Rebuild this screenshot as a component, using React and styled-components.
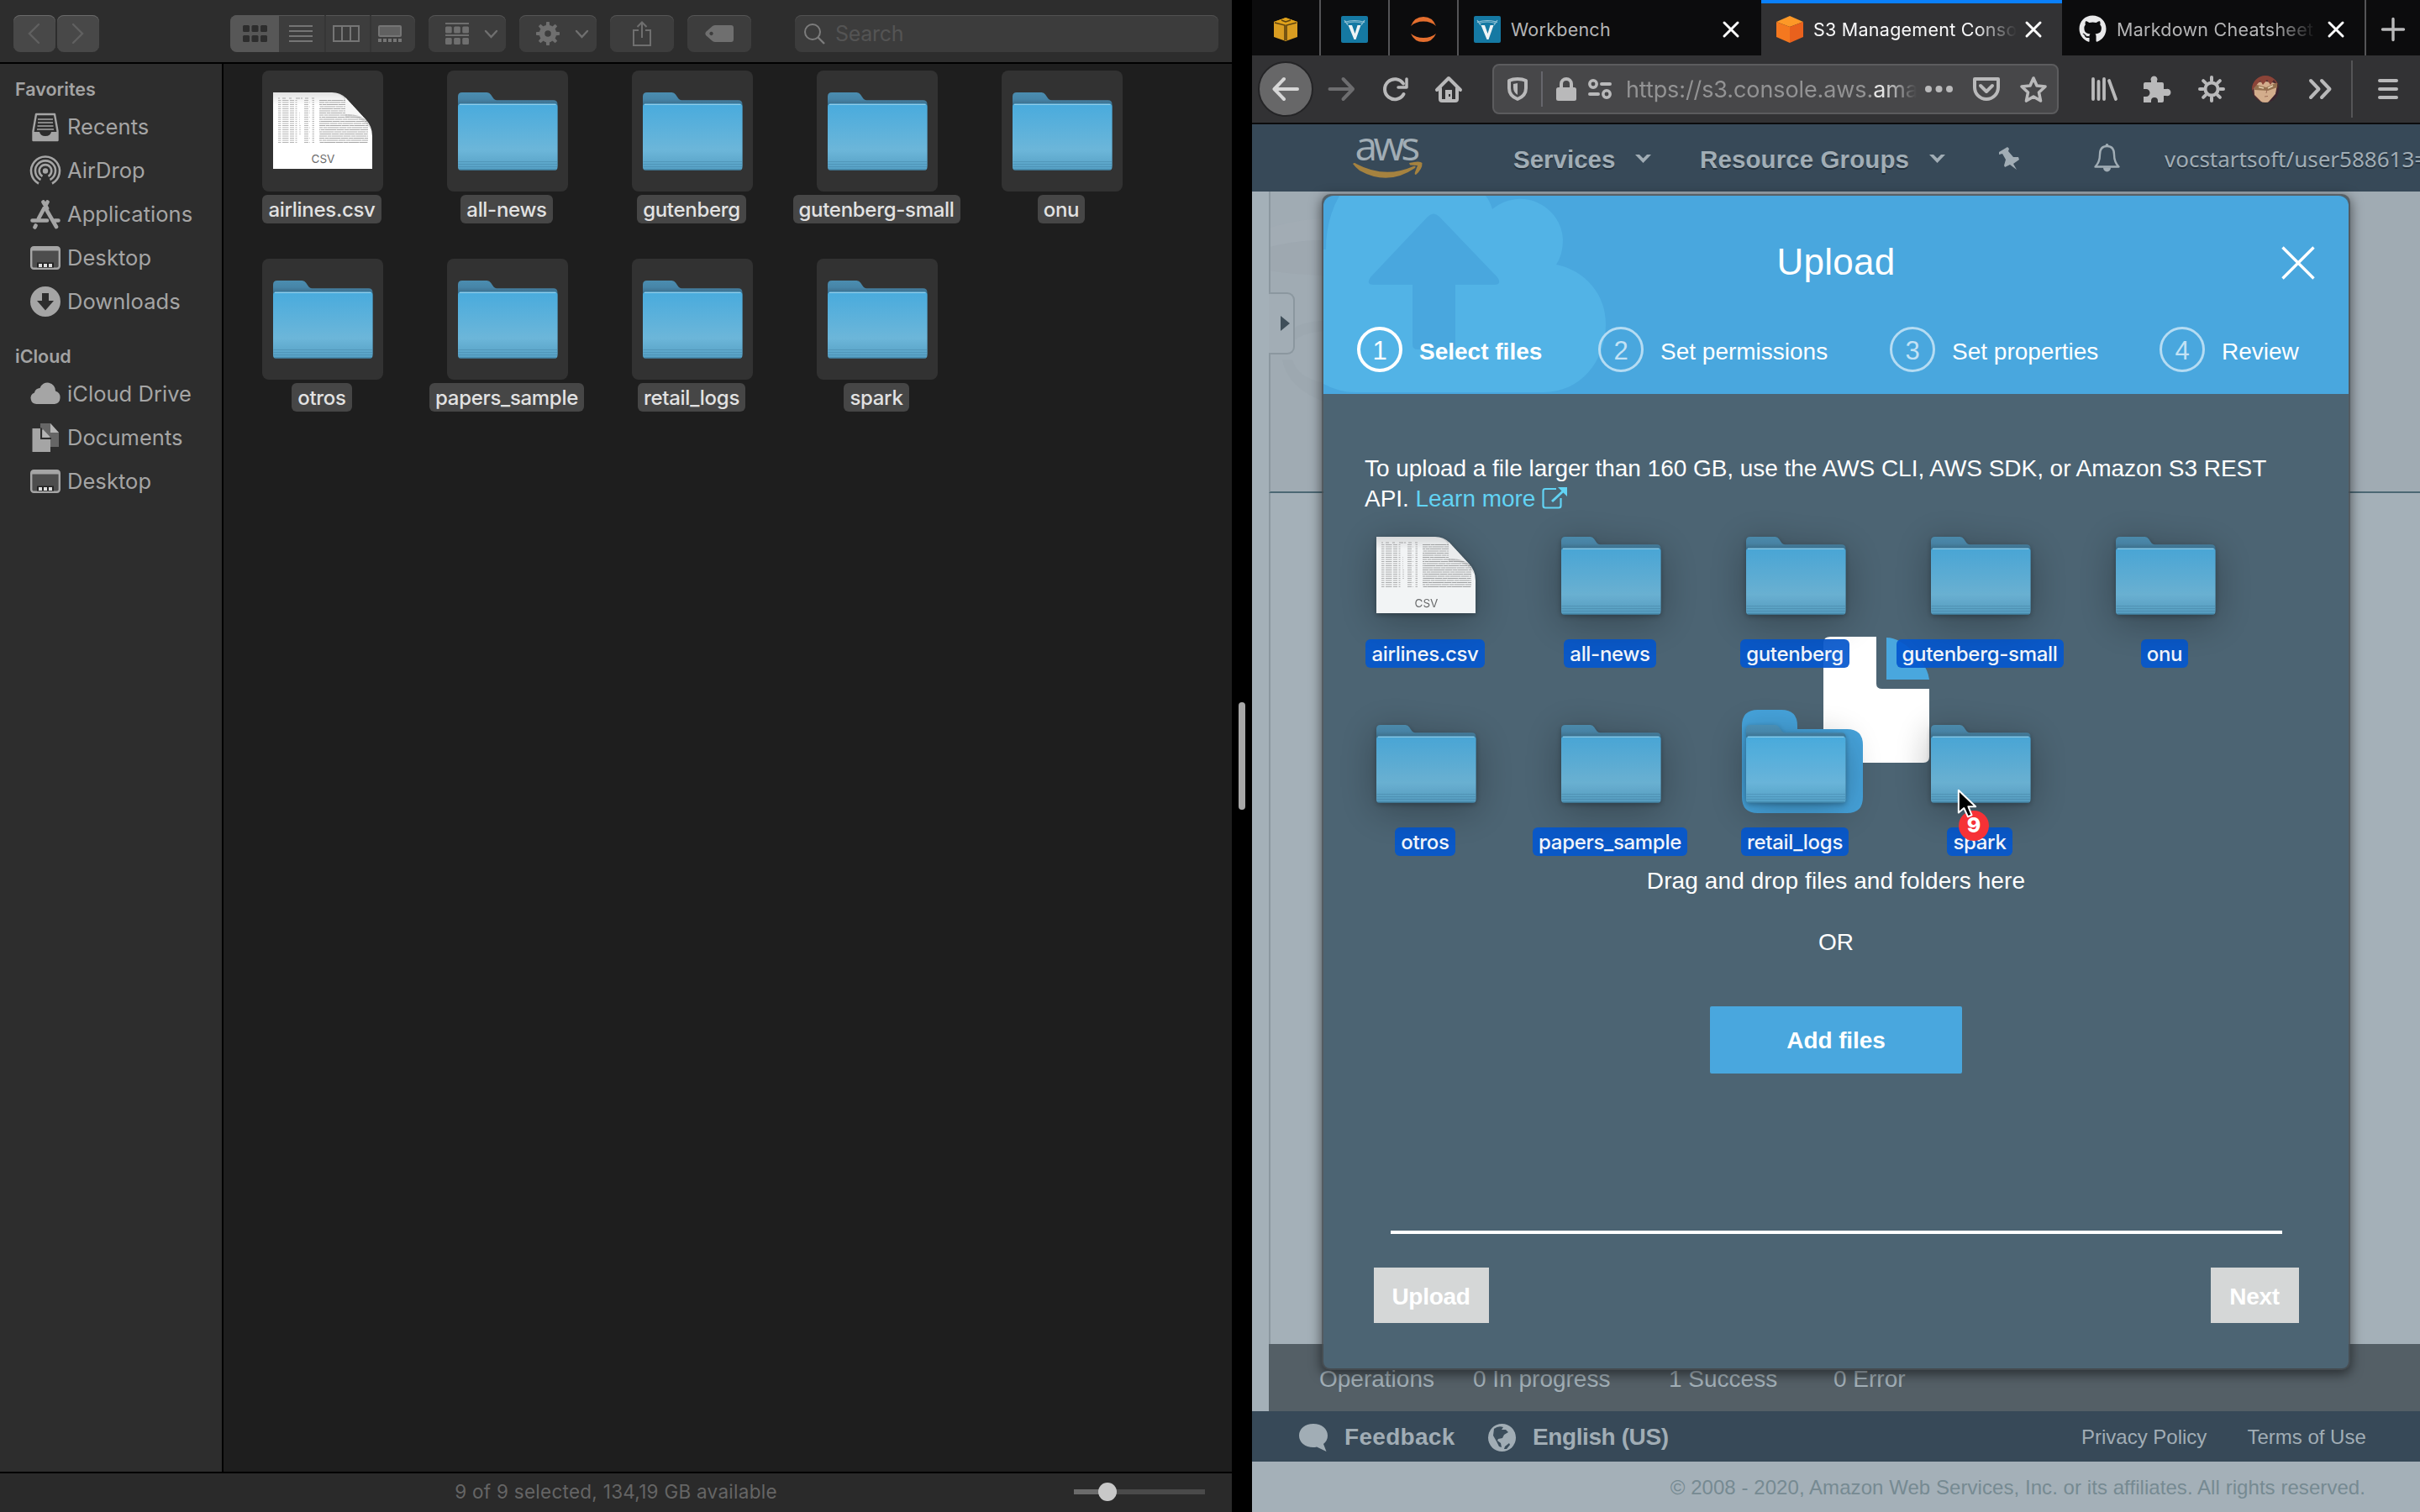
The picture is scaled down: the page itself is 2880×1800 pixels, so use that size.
import React from "react";
import styled, { createGlobalStyle, css } from "styled-components";
import { FaGithub } from "react-icons/fa";

const GlobalStyle = createGlobalStyle`
  * { box-sizing: border-box; }
  body { margin: 0; background: #000; overflow: hidden; }
`;

const inter = `Inter, Roboto, sans-serif`;
const helv = `"Liberation Sans", Arial, sans-serif`;

const Screen = styled.div`
  position: relative;
  display: flex;
  width: 2880px;
  height: 1800px;
  overflow: hidden;
  background: #000;
  font-family: ${inter};
`;

const Glyph = styled.svg`
  display: block;
  flex: none;
  width: ${(p) => p.$w}px;
  height: ${(p) => p.$h}px;
  margin-left: ${(p) => p.$ml || 0}px;
  overflow: visible;
`;

/* ---------- Finder ---------- */

const Finder = styled.section`
  display: flex;
  flex-direction: column;
  width: 1466px;
  height: 100%;
  background: #1e1e1e;
`;

const FinderBar = styled.header`
  display: flex;
  align-items: center;
  height: 76px;
  padding: 6px 16px 0;
  border-bottom: 2px solid #000;
  background: #2d2d2d;
`;

const BarButton = styled.div`
  display: flex;
  align-items: center;
  justify-content: center;
  gap: ${(p) => p.$gap || 0}px;
  width: ${(p) => p.$w}px;
  height: 44px;
  margin-left: ${(p) => p.$ml || 0}px;
  padding-left: ${(p) => (p.$gap ? 10 : 0)}px;
  border-radius: 8px;
  background: ${(p) => (p.$light ? "#484848" : "#3d3d3d")};
  box-shadow: inset 0 1px 0 ${(p) => (p.$light ? "#6a6a6a" : "#555")};
  color: #6f6f6f;
`;

const Segments = styled.div`
  display: flex;
  width: 220px;
  height: 44px;
  margin-left: 156px;
  border-radius: 8px;
  overflow: hidden;
  background: #3d3d3d;
  box-shadow: inset 0 1px 0 #555;
  color: #6f6f6f;
`;

const Segment = styled.div`
  display: flex;
  align-items: center;
  justify-content: center;
  width: ${(p) => (p.$active ? 58 : 54)}px;
  padding-right: ${(p) => p.$pr || 0}px;
  background: ${(p) => (p.$active ? "#575757" : "transparent")};
  color: ${(p) => (p.$active ? "#2d2d2d" : "#757575")};
  & + & + & { border-left: 2px solid #363636; }
`;

const SearchBox = styled.div`
  display: flex;
  align-items: center;
  width: 504px;
  height: 44px;
  margin-left: 52px;
  padding-left: 11px;
  gap: 12px;
  border-radius: 8px;
  background: #3c3c3c;
  box-shadow: inset 0 1px 0 #515151;
  color: #545454;
  font-size: 25px;
  letter-spacing: -0.3px;
`;

const FinderMain = styled.div`
  display: flex;
  flex: 1;
  min-height: 0;
`;

const Sidebar = styled.nav`
  width: 266px;
  border-right: 2px solid #000;
  background: #2d2d2d;
  color: #a5a5a5;
`;

const SideHeading = styled.h2`
  display: flex;
  align-items: center;
  height: ${(p) => (p.$first ? 49 : 58)}px;
  margin: 0;
  padding: ${(p) => (p.$first ? 11 : 20)}px 0 0 18px;
  font-size: 21.5px;
  font-weight: 600;
  letter-spacing: 0;
  color: #a3a3a3;
`;

const SideItem = styled.div`
  display: flex;
  align-items: center;
  height: 52px;
  padding-left: 36px;
  gap: 8px;
  font-size: 25.5px;
  letter-spacing: 0.05px;
`;

const SideName = styled.span`
  padding-bottom: 2px;
`;

const Files = styled.div`
  flex: 1;
  padding: 8px 0 0 46px;
`;

const FileGrid = styled.div`
  display: grid;
  grid-template-columns: repeat(5, 144px);
  grid-auto-rows: 182px;
  column-gap: 76px;
  row-gap: 42px;
`;

const FileCell = styled.figure`
  display: flex;
  flex-direction: column;
  align-items: center;
  gap: 4px;
  margin: 0;
`;

const Tile = styled.div`
  display: flex;
  justify-content: center;
  width: 144px;
  height: 144px;
  padding-top: 26px;
  border-radius: 8px;
  background: ${(p) => (p.$drag ? "transparent" : "#323232")};
  ${(p) =>
    p.$drag
      ? css`opacity: 0.93; filter: drop-shadow(0 2px 3px rgba(0, 0, 0, 0.3)) drop-shadow(0 8px 22px rgba(0, 0, 0, 0.3));`
      : css`filter: none;`}
`;

const FileLabel = styled.figcaption`
  height: 34px;
  padding: 0 7px;
  border-radius: 6px;
  margin-right: 2px;
  background: ${(p) => (p.$drag ? "rgba(4, 87, 206, 0.92)" : "#464646")};
  color: ${(p) => (p.$drag ? "#f2f5fa" : "#e2e2e2")};
  font-size: 24px;
  font-weight: 500;
  line-height: 35px;
  letter-spacing: -0.3px;
  white-space: nowrap;
`;

const FinderFooter = styled.footer`
  position: relative;
  display: flex;
  align-items: center;
  justify-content: center;
  height: 48px;
  border-top: 2px solid #000;
  background: #2a2a2a;
  color: #656565;
  font-size: 22.5px;
  line-height: 24px;
  padding-bottom: 2px;
  letter-spacing: 0.27px;
`;

const Slider = styled.div`
  position: absolute;
  right: 32px;
  display: flex;
  align-items: center;
  width: 156px;
  height: 22px;
  background: linear-gradient(90deg, #6b6b6b 40px, #4a4a4a 40px) center / 100% 6px no-repeat;
`;

const Knob = styled.div`
  width: 22px;
  height: 22px;
  margin-left: 29px;
  border-radius: 50%;
  background: #c8c8c8;
`;

const SplitBar = styled.div`
  display: flex;
  align-items: center;
  justify-content: center;
  width: 24px;
  background: #000;
  &::after {
    content: "";
    width: 8px;
    height: 128px;
    border-radius: 4px;
    background: #a8a8a8;
  }
`;

/* ---------- Browser ---------- */

const Browser = styled.section`
  position: relative;
  display: flex;
  flex-direction: column;
  width: 1390px;
  height: 100%;
  overflow: hidden;
  background: #a4b0b8;
`;

const TabStrip = styled.div`
  display: flex;
  height: 66px;
  background: #0c0c0d;
`;

const Tab = styled.div`
  display: flex;
  align-items: center;
  width: ${(p) => p.$w}px;
  padding: 3px 0 0 ${(p) => p.$pl || 0}px;
  color: ${(p) => (p.$active ? "#f9f9fa" : "#b5b5b6")};
  background: ${(p) => (p.$active ? "#323234" : "transparent")};
  box-shadow: ${(p) => (p.$active ? "inset 0 4px 0 #0a80fb" : "none")};
  border-right: ${(p) => (p.$edge ? "2px solid #545456" : "none")};
  ${(p) => p.$pin && css`justify-content: center;`}
`;

const TabTitle = styled.span`
  width: ${(p) => p.$w}px;
  margin-left: 12px;
  overflow: hidden;
  white-space: nowrap;
  font-size: 21.5px;
  line-height: 32px;
  letter-spacing: 0.25px;
  ${(p) => p.$fade && css`mask-image: linear-gradient(90deg, #000 ${p.$w - 50}px, transparent ${p.$w}px);`}
`;

const NavBar = styled.div`
  display: flex;
  align-items: center;
  height: 82px;
  padding-left: 7px;
  border-bottom: 2px solid #0c0c0d;
  background: #323234;
  color: #b9b9ba;
`;

const BackButton = styled.div`
  display: flex;
  align-items: center;
  justify-content: center;
  width: 66px;
  height: 66px;
  border: 2px solid #242426;
  border-radius: 50%;
  background: #676768;
  color: #d6d6d6;
`;

const UrlBar = styled.div`
  display: flex;
  align-items: center;
  width: 674px;
  height: 60px;
  margin-left: 36px;
  border: 2px solid #5c5c5e;
  border-radius: 8px;
  background: #474749;
`;

const Rule = styled.span`
  width: 2px;
  height: ${(p) => p.$h}px;
  margin-left: ${(p) => p.$ml}px;
  background: ${(p) => p.$c};
`;

const UrlText = styled.span`
  width: 348px;
  margin-left: 17px;
  padding-top: 2px;
  overflow: hidden;
  white-space: nowrap;
  color: #939394;
  font-size: 27px;
  line-height: 40px;
  letter-spacing: -0.1px;
  mask-image: linear-gradient(90deg, #000 306px, transparent 346px);
  b { font-weight: 400; color: #e4e4e4; }
`;

const AwsBar = styled.div`
  display: flex;
  align-items: center;
  height: 80px;
  flex: none;
  overflow: hidden;
  white-space: nowrap;
  background: #374958;
  color: #a1adb5;
`;

const AwsLogo = styled.div`
  display: flex;
  flex: none;
  flex-direction: column;
  align-items: center;
  width: 84px;
  height: 52px;
  margin: 0 0 0 119px;
`;

const AwsWord = styled.span`
  height: 31px;
  font-family: "Open Sans", "Noto Sans", sans-serif;
  font-size: 48px;
  font-weight: 500;
  line-height: 22px;
  letter-spacing: -4.5px;
  margin-left: -4px;
`;

const AwsMenu = styled.span`
  flex: none;
  margin-left: ${(p) => p.$ml}px;
  width: ${(p) => p.$w}px;
  padding-top: 3px;
  font-family: ${helv};
  font-size: 29.5px;
  font-weight: 700;
  line-height: 40px;
  letter-spacing: ${(p) => p.$ls || 0}px;
  text-shadow: 0 2px 0 #23303b;
`;

const AwsUser = styled.span`
  flex: none;
  margin-left: 53px;
  padding-top: 2px;
  font-family: "Noto Sans", "Open Sans", sans-serif;
  font-size: 26px;
  line-height: 40px;
  letter-spacing: 0;
  text-shadow: 0 2px 0 #23303b;
`;

const Workspace = styled.div`
  position: relative;
  display: flex;
  flex: 1;
  min-height: 0;
  padding-left: 20px;
`;

const Main = styled.main`
  display: flex;
  flex-direction: column;
  flex: 1;
`;

const Hero = styled.div`
  height: 359px;
  border-left: 2px solid #8b979f;
  border-bottom: 2px solid #4c6874;
  background: #a0abb3;
  overflow: hidden;
`;

const Listing = styled.div`
  flex: 1;
  border-left: 2px solid #8b979f;
`;

const Handle = styled.div`
  position: absolute;
  left: 20px;
  top: 120px;
  display: flex;
  align-items: center;
  width: 31px;
  height: 74px;
  padding-left: 14px;
  border: 2px solid #8b979f;
  border-left: 0;
  border-radius: 0 9px 9px 0;
  background: #a2adb5;
`;

const Operations = styled.div`
  display: flex;
  height: 80px;
  padding: 1px 0 0 60px;
  background: #545f66;
  color: #a3b0b8;
  font-family: ${helv};
  font-size: 28px;
  line-height: 81px;
  white-space: nowrap;
`;

const Operation = styled.span`
  width: ${(p) => p.$w}px;
`;

const AwsFooter = styled.div`
  display: flex;
  align-items: center;
  height: 60px;
  padding: 2px 64px 0 56px;
  background: #374958;
  color: #a1adb5;
  font-family: ${helv};
  font-size: 28px;
  font-weight: 700;
`;

const FooterText = styled.span`
  width: ${(p) => p.$w}px;
  margin-left: 20px;
  white-space: nowrap;
  letter-spacing: ${(p) => p.$ls || 0}px;
`;

const FooterLink = styled.span`
  margin-left: ${(p) => p.$ml}px;
  white-space: nowrap;
  font-size: 24px;
  font-weight: 400;
`;

const Copyright = styled.div`
  height: 60px;
  padding-right: 65px;
  color: #768a92;
  font-family: ${helv};
  font-size: 24px;
  line-height: 62px;
  text-align: right;
  white-space: nowrap;
  letter-spacing: 0.06px;
`;

/* ---------- Upload dialog ---------- */

const Dialog = styled.div`
  position: absolute;
  left: 85px;
  top: 233px;
  display: flex;
  flex-direction: column;
  width: 1220px;
  height: 1396px;
  border-radius: 8px;
  background: #4c6473;
  box-shadow: 0 0 0 2px rgba(75, 82, 87, 0.75), 0 4px 14px 3px rgba(0, 0, 0, 0.5);
  color: #fff;
  font-family: ${helv};
`;

const DialogHead = styled.header`
  position: relative;
  height: 236px;
  border-radius: 12px 12px 0 0;
  overflow: hidden;
  background: #49a7de;
`;

const HeadArt = styled.svg`
  position: absolute;
  left: 0;
  top: 0;
  width: 360px;
  height: 236px;
`;

const TitleRow = styled.div`
  position: relative;
  display: grid;
  grid-template-columns: 1fr auto 1fr;
  align-items: center;
  height: 156px;
  padding: 4px 40px 0;
`;

const Title = styled.h1`
  grid-column: 2;
  margin: 0 0 2px;
  font-size: 44px;
  font-weight: 400;
  letter-spacing: 0.3px;
`;

const CloseIcon = styled(Glyph)`
  justify-self: end;
`;

const Steps = styled.div`
  position: relative;
  display: flex;
  padding-left: 40px;
`;

const Step = styled.div`
  display: flex;
  align-items: center;
  gap: 20px;
  width: ${(p) => p.$w}px;
  font-size: 28px;
  white-space: nowrap;
  font-weight: ${(p) => (p.$on ? 700 : 400)};
`;

const StepName = styled.span`
  padding-top: 5px;
`;

const StepNumber = styled.span`
  width: 54px;
  height: 54px;
  border: ${(p) => (p.$on ? 4 : 3)}px solid ${(p) => (p.$on ? "#fff" : "#b5dcf3")};
  border-radius: 50%;
  color: ${(p) => (p.$on ? "#fff" : "#c3e2f5")};
  font-size: 31px;
  font-weight: 400;
  line-height: ${(p) => (p.$on ? 49 : 51)}px;
  text-align: center;
`;

const DialogBody = styled.div`
  display: flex;
  flex-direction: column;
  align-items: center;
  height: 1160px;
  padding-top: 71px;
  font-size: 28px;
  line-height: 36px;
`;

const Hint = styled.p`
  align-self: flex-start;
  margin: 0 0 0 49px;
  white-space: nowrap;
  letter-spacing: -0.04px;
`;

const LearnMore = styled.a`
  color: #62d3f4;
  svg { display: inline-block; vertical-align: -3px; }
`;

const DropArt = styled.svg`
  flex: none;
  width: 224px;
  height: 212px;
  margin: 146px 0 61px;
  overflow: visible;
`;

const DropText = styled.p`
  margin: 0;
  height: 73px;
  white-space: nowrap;
  letter-spacing: 0.1px;
`;

const AddButton = styled.button`
  flex: none;
  width: 300px;
  height: 80px;
  margin-top: 21px;
  padding: 2px 0 0;
  border: 0;
  border-radius: 2px;
  background: #49a7de;
  color: #fff;
  font: 700 28px ${helv};
  letter-spacing: -0.1px;
`;

const Divider = styled.div`
  width: 1061px;
  height: 4px;
  margin-top: 187px;
  background: #fff;
`;

const Actions = styled.div`
  display: flex;
  justify-content: space-between;
  width: 1101px;
  margin-top: 40px;
`;

const ActionButton = styled.button`
  width: ${(p) => p.$w}px;
  height: 66px;
  border: 0;
  padding: 3px 0 0;
  background: #d5d7d7;
  color: #fff;
  font: 700 28px ${helv};
  letter-spacing: -0.3px;
`;

/* ---------- Drag overlay ---------- */

const DragLayer = styled.div`
  position: absolute;
  left: 1625px;
  top: 613px;
`;

const Pointer = styled.svg`
  position: absolute;
  left: 2329px;
  top: 938px;
  width: 24px;
  height: 37px;
`;

const Badge = styled.div`
  position: absolute;
  left: 2331px;
  top: 965px;
  width: 36px;
  height: 36px;
  border-radius: 50%;
  background: #f63136;
  color: #fff;
  font-size: 25px;
  font-weight: 800;
  line-height: 34px;
  text-align: center;
`;

const FolderIcon = ({ id }) => (
  <Glyph $w={118.5} $h={93} viewBox="0 0 118.5 93">
    <defs>
      <linearGradient id={`front-${id}`} x1="0" y1="0" x2="0" y2="1">
        <stop offset="0" stopColor="#49abdd" />
        <stop offset="0.7" stopColor="#6cb6d9" />
        <stop offset="1" stopColor="#559fc3" />
      </linearGradient>
      <linearGradient id={`back-${id}`} x1="0" y1="0" x2="0" y2="1">
        <stop offset="0" stopColor="#4b8db0" />
        <stop offset="0.09" stopColor="#4785a8" />
        <stop offset="0.16" stopColor="#3c6f8c" />
      </linearGradient>
    </defs>
    <path d="M0 5Q0 0 5 0H34.500Q37.500 0 39 2.500L42.500 7.500Q44 9.200 46 9.200H113.500Q118.500 9.200 118.500 14V88H0Z" fill={`url(#back-${id})`} />
    <rect y="13.500" width="118.500" height="79" rx="3.500" fill={`url(#front-${id})`} />
    <path d="M2 14.300H116.500" stroke="#8fcdea" strokeWidth="1.200" />
    <path d="M0.500 82.500H118M0.500 85.500H118M0.500 88.500H118" stroke="#4789ab" strokeOpacity="0.55" strokeWidth="1" />
    <path d="M1.500 92H117" stroke="#3a7a9c" strokeWidth="1" />
  </Glyph>
);

const csvRows = Array.from({ length: 21 }, (_, i) => ({ y: 9.5 + i * 2.5, shift: (i * 37) % 17 }));

const CsvIcon = ({ id }) => (
  <Glyph $w={118} $h={92} viewBox="0 0 118 92">
    <defs>
      <clipPath id={`doc-${id}`}>
        <path d="M0 0H70Q80 0 87 7L110 32Q118 40 118 52V91H0Z" />
      </clipPath>
      <linearGradient id={`shade-${id}`} x1="0" y1="0" x2="0" y2="1">
        <stop offset="0" stopColor="#e2e2e2" />
        <stop offset="0.16" stopColor="#fff" />
      </linearGradient>
    </defs>
    <g clipPath={`url(#doc-${id})`}>
      <rect width="118" height="91" fill={`url(#shade-${id})`} />
      <path d="M6 7H53" stroke="#aaa" strokeWidth="1.200" strokeDasharray="2 3 4 4 3 5 5 1" />
      {csvRows.map(({ y, shift }) => (
        <g key={y} strokeWidth="1.200" stroke="#b4b4b4">
          <path d={`M6 ${y}h3.500M11 ${y}h7.500M20 ${y}h5M26.500 ${y}h2M37 ${y}h5M46.500 ${y}h2.500`} />
          <path d={`M31 ${y}h${shift % 3}M43 ${y}h${shift % 2}`} stroke="#ccc" />
          <path d={`M55 ${y}H113`} strokeDasharray="9 0.600 5 0.400 13 0.500" strokeDashoffset={shift} stroke="#a6a6a6" />
        </g>
      ))}
      <path d="M78 2Q86 6 86 14V30Q104 26 116 44L118 20L90 -4Z" fill="#999" opacity="0.25" />
      <path d="M86 6V26Q101 25 111 33Z" fill="#f7f7f7" />
    </g>
    <text x="59.500" y="84" textAnchor="middle" fontFamily={inter} fontSize="13.500" fill="#6c6c6c">CSV</text>
  </Glyph>
);

const fileNames = ["airlines.csv", "all-news", "gutenberg", "gutenberg-small", "onu", "otros", "papers_sample", "retail_logs", "spark"];

const FileSet = ({ drag }) => (
  <FileGrid>
    {fileNames.map((name) => {
      const id = `${drag ? "d" : "f"}-${name.replace(".", "")}`;
      return (
        <FileCell key={name}>
          <Tile $drag={drag}>{name.endsWith(".csv") ? <CsvIcon id={id} /> : <FolderIcon id={id} />}</Tile>
          <FileLabel $drag={drag}>{name}</FileLabel>
        </FileCell>
      );
    })}
  </FileGrid>
);

const sideIcons = {
  Recents: (
    <>
      <path d="M7 3H29L32.500 23V34H3.500V23Z" fill="none" stroke="currentColor" strokeWidth="2.400" strokeLinejoin="round" />
      <path d="M9 9H27M9 13H27M8.500 17H27.500M8 21H28" stroke="currentColor" strokeWidth="1.700" />
      <path d="M3.500 24H11Q12 29 18 29T25 24H32.500V35H3.500Z" fill="currentColor" />
    </>
  ),
  AirDrop: (
    <g fill="none" stroke="currentColor" strokeWidth="2.600">
      <path d="M10 33.500A17 17 0 1 1 26 33.500" />
      <path d="M12.500 29A12 12 0 1 1 23.500 29" />
      <path d="M14.500 24.800A7.300 7.300 0 1 1 21.500 24.800" />
      <circle cx="18" cy="18.500" r="1.900" fill="currentColor" />
    </g>
  ),
  Applications: (
    <g stroke="currentColor" strokeWidth="4.600" strokeLinecap="round" fill="none">
      <path d="M15.500 3.500L20 11M20.500 3.500L10 23M2.500 25.500H20M29 25.500H33.500M6.500 31.500L5.500 33.500M20 14L31 33" />
    </g>
  ),
  Desktop: (
    <>
      <rect x="1.200" y="5.200" width="33.600" height="25.600" rx="3" fill="#4d4d4d" stroke="currentColor" strokeWidth="2.400" />
      <path d="M1.200 7.500H34.800" stroke="currentColor" strokeWidth="4" />
      <rect x="8" y="23.500" width="20" height="6" fill="#222" />
      <path d="M10 27h4M16 27h4M22 27h4" stroke="#ddd" strokeWidth="4" />
    </>
  ),
  Downloads: (
    <>
      <circle cx="18" cy="18" r="18" fill="currentColor" />
      <path d="M14 8H22V17H28L18 28.500L8 17H14Z" fill="#2d2d2d" />
    </>
  ),
  "iCloud Drive": (
    <path d="M7.500 30A7 7 0 0 1 5 16.500A6.500 6.500 0 0 1 11.500 11A9.500 9.500 0 0 1 30 14.500A8 8 0 0 1 29 30Z" fill="currentColor" />
  ),
  Documents: (
    <>
      <path d="M12 1H24L34 12V29H12Z" fill="#666" />
      <path d="M24 1L34 12H24Z" fill="#b5b5b5" />
      <path d="M2.500 7H13L24 19V35H2.500Z" fill="currentColor" />
      <path d="M13 6.500V19H25" fill="none" stroke="#2d2d2d" strokeWidth="2" />
      <path d="M15 8L24 17.500H15Z" fill="#b5b5b5" />
    </>
  ),
};

const SideRow = ({ name }) => (
  <SideItem>
    <Glyph $w={36} $h={36} viewBox="0 0 36 36">{sideIcons[name]}</Glyph>
    <SideName>{name}</SideName>
  </SideItem>
);

const Chevron = () => (
  <Glyph $w={15} $h={9} viewBox="0 0 15 9">
    <path d="M1 1L7.500 8L14 1" fill="none" stroke="currentColor" strokeWidth="2.400" strokeLinecap="round" />
  </Glyph>
);

const NavChevron = ({ flip }) => (
  <Glyph $w={14} $h={24} viewBox="0 0 14 24">
    <path d={flip ? "M1 1L12 12L1 23" : "M12 1L1 12L12 23"} fill="none" stroke="#606060" strokeWidth="2.400" strokeLinecap="round" />
  </Glyph>
);

const gearTeeth = [0, 45, 90, 135, 180, 225, 270, 315];

const Squares = ({ ys }) => ys.map((y) => [0, 10.5, 21].map((x) => <rect key={`${x}${y}`} x={x} y={y} width="8" height="8" rx="1.500" fill="currentColor" />));

const Cross = ({ ml }) => (
  <Glyph $w={20} $h={20} $ml={ml} viewBox="0 0 20 20">
    <path d="M2 2L18 18M18 2L2 18" stroke="#fff" strokeWidth="3" strokeLinecap="round" />
  </Glyph>
);

const VocIcon = () => (
  <Glyph $w={32} $h={32} viewBox="0 0 32 32">
    <rect width="32" height="32" rx="2" fill="#1579a3" />
    <path d="M8.500 11H13L16.500 21L19.500 11H23.500L17.500 28H15.500Z" fill="#eef3f5" />
    <path d="M4 7.500Q16 3.500 28 7.500M7 8.500Q16 5.500 25 8.500M4 5L8 11M28 5L24 11" stroke="#8ec0d4" strokeWidth="1.200" fill="none" />
  </Glyph>
);

const FinderWindow = () => (
  <Finder>
    <FinderBar>
      <BarButton $w={50} $light><NavChevron /></BarButton>
      <BarButton $w={50} $ml={2} $light><NavChevron flip /></BarButton>
      <Segments>
        <Segment $active><Glyph $w={29} $h={20} viewBox="0 0 29 20"><Squares ys={[0, 12]} /></Glyph></Segment>
        <Segment $pr={2}><Glyph $w={28} $h={20} viewBox="0 0 28 20"><path d="M0 1H28M0 7H28M0 13H28M0 19H28" stroke="currentColor" strokeWidth="2" /></Glyph></Segment>
        <Segment $pr={4}><Glyph $w={32} $h={20} viewBox="0 0 32 20"><path d="M1 1H31V19H1ZM11 1V19M21 1V19" fill="none" stroke="currentColor" strokeWidth="2" /></Glyph></Segment>
        <Segment $pr={8}>
          <Glyph $w={28} $h={20} viewBox="0 0 28 20">
            <rect x="1" y="1" width="26" height="12" rx="1" fill="#616161" stroke="currentColor" strokeWidth="2" />
            <path d="M0 18h4M6 18h4M12 18h4M18 18h4M24 18h4" stroke="currentColor" strokeWidth="4" />
          </Glyph>
        </Segment>
      </Segments>
      <BarButton $w={92} $ml={16} $gap={19}>
        <Glyph $w={28} $h={26} viewBox="0 0 28 26"><path d="M0 1H28M0 15H28" stroke="currentColor" strokeWidth="2" /><g transform="scale(0.965 1)"><Squares ys={[4.5, 18]} /></g></Glyph>
        <Chevron />
      </BarButton>
      <BarButton $w={92} $ml={16} $gap={19}>
        <Glyph $w={28} $h={28} viewBox="-14 -14 28 28">
          <circle r="7" fill="none" stroke="currentColor" strokeWidth="6.500" />
          {gearTeeth.map((a) => <path key={a} d="M-2.400 -8L-1.800 -14H1.800L2.400 -8Z" fill="currentColor" transform={`rotate(${a})`} />)}
        </Glyph>
        <Chevron />
      </BarButton>
      <BarButton $w={76} $ml={16}>
        <Glyph $w={22} $h={30} viewBox="0 0 22 30"><path d="M7 11H1V29H21V11H15M11 20V1.500M5.500 7L11 1.500L16.500 7" fill="none" stroke="currentColor" strokeWidth="2" /></Glyph>
      </BarButton>
      <BarButton $w={76} $ml={16}>
        <Glyph $w={34} $h={20} viewBox="0 0 34 20"><path fillRule="evenodd" d="M9 1Q10.500 0 12 0H31Q34 0 34 3V17Q34 20 31 20H12Q10.500 20 9 19L1 12Q-0.500 10 1 8ZM7.500 7.800a2.200 2.200 0 1 0 0.100 0Z" fill="currentColor" /></Glyph>
      </BarButton>
      <SearchBox>
        <Glyph $w={25} $h={25} viewBox="0 0 25 25"><circle cx="10" cy="10" r="9" fill="none" stroke="#7c7c7c" strokeWidth="2" /><path d="M16.500 16.500L24 24" stroke="#7c7c7c" strokeWidth="2.400" /></Glyph>
        Search
      </SearchBox>
    </FinderBar>
    <FinderMain>
      <Sidebar>
        <SideHeading $first>Favorites</SideHeading>
        {["Recents", "AirDrop", "Applications", "Desktop", "Downloads"].map((n) => <SideRow key={n} name={n} />)}
        <SideHeading>iCloud</SideHeading>
        {["iCloud Drive", "Documents", "Desktop"].map((n) => <SideRow key={n} name={n} />)}
      </Sidebar>
      <Files><FileSet /></Files>
    </FinderMain>
    <FinderFooter>
      9 of 9 selected, 134,19 GB available
      <Slider><Knob /></Slider>
    </FinderFooter>
  </Finder>
);

const Tabs = () => (
  <TabStrip>
    <Tab $w={82} $pin $edge>
      <Glyph $w={28} $h={28} viewBox="0 0 28 28">
        <path d="M0 5L14 0L28 5V23L14 28L0 23Z" fill="#d99d21" />
        <path d="M0 5L14 9L28 5L14 0Z" fill="#dfa11a" />
        <path d="M1 6L13 9V27M27 6L15 9V27M9 3L14 5L20 3" fill="none" stroke="#5d4310" strokeWidth="1.600" />
      </Glyph>
    </Tab>
    <Tab $w={82} $pin $edge><VocIcon /></Tab>
    <Tab $w={82} $pin $edge>
      <Glyph $w={30} $h={30} viewBox="0 0 30 30">
        <path d="M0 11Q4 0 15 0T30 11Q24 5.500 15 5.500T0 11ZM0 20Q4 30 15 30T30 20Q24 25 15 25T0 20Z" fill="#e46e2e" />
      </Glyph>
    </Tab>
    <Tab $w={360} $pl={18}><VocIcon /><TabTitle $w={240}>Workbench</TabTitle><Cross ml={12} /></Tab>
    <Tab $w={358} $pl={18} $active>
      <Glyph $w={32} $h={32} viewBox="0 0 32 32">
        <path d="M16 0L32 7L16 13L0 7Z" fill="#fd9827" />
        <path d="M0 7L16 13V32L0 25Z" fill="#f4781f" />
        <path d="M32 7L16 13V32L32 25Z" fill="#e9611d" />
      </Glyph>
      <TabTitle $w={242} $fade>S3 Management Console</TabTitle><Cross ml={10} />
    </Tab>
    <Tab $w={362} $pl={20} $edge>
      <FaGithub size={33} color="#e9e9ea" style={{ flex: "none" }} />
      <TabTitle $w={238} $fade>Markdown Cheatsheet</TabTitle><Cross ml={13} />
    </Tab>
    <Tab $w={64} $pl={18}>
      <Glyph $w={28} $h={28} viewBox="0 0 28 28"><path d="M14 1.500V26.500M1.500 14H26.500" stroke="#b9b9ba" strokeWidth="3.400" strokeLinecap="round" /></Glyph>
    </Tab>
  </TabStrip>
);

const line = { fill: "none", stroke: "currentColor", strokeWidth: 4, strokeLinecap: "round", strokeLinejoin: "round" };

const Navigation = () => (
  <NavBar>
    <BackButton><Glyph $w={32} $h={28} viewBox="0 0 32 28"><path d="M30 14H3M14 2L2.500 14L14 26" {...line} /></Glyph></BackButton>
    <Glyph $w={33} $h={28} $ml={17} viewBox="0 0 32 28" color="#6d6d6f"><path d="M2 14H29M18 2L29.500 14L18 26" {...line} /></Glyph>
    <Glyph $w={31} $h={28} $ml={32} viewBox="0 0 31 28">
      <path d="M25.500 20A12 12 0 1 1 25 7.500" {...line} />
      <path d="M29 2V12H19" {...line} strokeWidth="3.500" />
    </Glyph>
    <Glyph $w={32} $h={32} $ml={32} viewBox="0 0 32 32">
      <path d="M2 17L16 3L30 17M6 15V28Q6 30 8 30H24Q26 30 26 28V15" {...line} />
      <path fillRule="evenodd" d="M12 17H20V30H12ZM16 22h2v3h-2Z" fill="currentColor" />
    </Glyph>
    <UrlBar>
      <Glyph $w={24} $h={28} $ml={16} viewBox="0 0 24 28">
        <path d="M12 2Q18 2 22 4V13Q22 22 12 26Q2 22 2 13V4Q6 2 12 2Z" {...line} />
        <path d="M12 7V21Q7 18 7 12V8Z" fill="currentColor" />
      </Glyph>
      <Rule $h={42} $ml={16} $c="#66666c" />
      <Glyph $w={24} $h={28} $ml={16} viewBox="0 0 24 28">
        <rect y="12" width="24" height="16" rx="2.500" fill="currentColor" />
        <path d="M6 14V8A6 6 0 0 1 18 8V14" {...line} />
      </Glyph>
      <Glyph $w={28} $h={24} $ml={14} viewBox="0 0 28 24">
        <circle cx="6" cy="6" r="4.200" {...line} strokeWidth="3.500" />
        <circle cx="22" cy="18" r="4.200" {...line} strokeWidth="3.500" />
        <path d="M16 6H26M2 18H12" {...line} />
      </Glyph>
      <UrlText>https://s3.console.aws.<b>amazon</b>.com</UrlText>
      <Glyph $w={34} $h={8} $ml={8} viewBox="0 0 34 8"><circle cx="4" cy="4" r="4" fill="currentColor" /><circle cx="16.500" cy="4" r="4" fill="currentColor" /><circle cx="29" cy="4" r="4" fill="currentColor" /></Glyph>
      <Glyph $w={32} $h={28} $ml={23} viewBox="0 0 32 28">
        <path d="M2 2H30V12A14 14 0 0 1 2 12Z" {...line} /><path d="M9 10L16 17L23 10" {...line} />
      </Glyph>
      <Glyph $w={32} $h={32} $ml={24} viewBox="0 0 32 32">
        <path d="M16 3L20 12L30 13L22.500 20L24.500 30L16 25L7.500 30L9.500 20L2 13L12 12Z" {...line} strokeWidth="3.600" />
      </Glyph>
    </UrlBar>
    <Glyph $w={31} $h={28} $ml={39} viewBox="0 0 31 28"><path d="M2 2V26M8.500 5V26M15 2V26M21 4L29 26" {...line} strokeWidth="3.800" /></Glyph>
    <Glyph $w={33} $h={32} $ml={31} viewBox="0 0 33 32">
      <path d="M0 10Q0 8 2 8H9V6.500A4 4 0 1 1 16 6.500V8H22Q24 8 24 10V16H27A4.200 4.200 0 1 1 27 24H24V30Q24 32 22 32H17V30A4 4 0 1 0 9 30V32H0V25H3A4.200 4.200 0 1 0 3 16H0Z" fill="currentColor" />
    </Glyph>
    <Glyph $w={32} $h={32} $ml={32} viewBox="-16 -16 32 32">
      <circle r="7.600" {...line} />
      {gearTeeth.map((a) => <path key={a} d="M0 -10V-14" {...line} transform={`rotate(${a})`} />)}
    </Glyph>
    <Glyph $w={32} $h={32} $ml={32} viewBox="0 0 32 32">
      <defs><clipPath id="face"><circle cx="16" cy="16" r="16" /></clipPath></defs>
      <g clipPath="url(#face)">
        <rect width="32" height="32" fill="#4b2b30" />
        <path d="M2 10Q16 4 30 10L28 22L19 32H12L3 23Z" fill="#d3ad8c" />
        <path d="M2 10L17 14L30 8V14L19 18L3 17Z" fill="#94704f" />
        <path d="M0 0H32V12L26 5L22 11L18 5L13 11L10 6L3 14L0 18Z" fill="#8b4438" />
        <path d="M8 13.500L14 15M19 15L25 12" stroke="#e5cfae" strokeWidth="1.800" />
        <path d="M15 25L19 24.500M18 16L17 21" stroke="#9c6b56" strokeWidth="1" />
        <path d="M32 12V32H20L28 22Z" fill="#3a2530" />
      </g>
    </Glyph>
    <Glyph $w={27} $h={24} $ml={36} viewBox="0 0 27 24"><path d="M2 2L11.500 12L2 22M15 2L24.500 12L15 22" {...line} /></Glyph>
    <Rule $h={68} $ml={23} $c="#555557" />
    <Glyph $w={24} $h={24} $ml={30} viewBox="0 0 24 24"><path d="M2 2H22M2 12H22M2 22H22" {...line} /></Glyph>
  </NavBar>
);

const AwsCaret = ({ ml }) => (
  <Glyph $w={19} $h={12} $ml={ml} viewBox="0 -2 19 12"><path d="M0 0H5L9.500 4.500L14 0H19L9.500 10Z" fill="currentColor" /></Glyph>
);

const AwsHeader = () => (
  <AwsBar>
    <AwsLogo>
      <AwsWord>aws</AwsWord>
      <Glyph $w={83} $h={19} viewBox="0 0 83 19">
        <path d="M0 2Q2 0 4 2Q38 20 72 5Q76 4 74 7Q42 29 8 10Q3 6 0 2Z" fill="#a5823f" />
        <path d="M67 1Q80 -2 82.500 1Q83 8 75 15Q73 15 74 12L77 4L68 3.500Z" fill="#a5823f" />
      </Glyph>
    </AwsLogo>
    <AwsMenu $ml={108} $w={124}>Services</AwsMenu>
    <AwsCaret ml={21} />
    <AwsMenu $ml={58} $w={251} $ls={0.1}>Resource Groups</AwsMenu>
    <AwsCaret ml={22} />
    <Glyph $w={25} $h={27} $ml={63} viewBox="0 0 25 27">
      <path d="M1 6L11 0L13 2L12 5L18 12L24 12L25 15L18 20L22 27L14 21L8 24L7 22L9 15L5 8L1 9Z" fill="currentColor" />
    </Glyph>
    <Glyph $w={31} $h={34} $ml={89} viewBox="0 0 31 34">
      <path d="M15.500 3Q24 3 24 13Q24 22 29.500 27.500H1.500Q7 22 7 13Q7 3 15.500 3Z" fill="none" stroke="currentColor" strokeWidth="2.400" strokeLinejoin="round" />
      <circle cx="15.500" cy="1.800" r="1.800" fill="currentColor" /><path d="M11 28.500A4.500 5 0 0 0 20 28.500Z" fill="currentColor" />
    </Glyph>
    <AwsUser>vocstartsoft/user588613=</AwsUser>
  </AwsBar>
);

const steps = [
  { name: "Select files", width: 287 },
  { name: "Set permissions", width: 347 },
  { name: "Set properties", width: 321 },
  { name: "Review", width: 170 },
];

const Upload = () => (
  <Dialog>
    <DialogHead>
      <HeadArt viewBox="0 0 360 236">
        <path d="M19 0Q3 28 3 64H0V224Q18 234 39 234H262C305 234 336 198 336 152C336 118 312 89 277 82Q285 70 285 52A51 51 0 0 0 201 16Q198 6 193 0Z" fill="#52b3e6" />
        <path d="M124 25Q131 18 138 25L207 97Q213 106 203 106H157V177Q157 183 151 183H112Q106 183 106 177V106H60Q50 106 56 97Z" fill="#49a7de" />
      </HeadArt>
      <TitleRow>
        <Title>Upload</Title>
        <CloseIcon $w={40} $h={40} viewBox="0 0 40 40"><path d="M1.500 1.500L38.500 38.500M38.500 1.500L1.500 38.500" stroke="#fff" strokeWidth="3.400" /></CloseIcon>
      </TitleRow>
      <Steps>
        {steps.map(({ name, width }, i) => (
          <Step key={name} $on={i === 0} $w={width}>
            <StepNumber $on={i === 0}>{i + 1}</StepNumber>
            <StepName>{name}</StepName>
          </Step>
        ))}
      </Steps>
    </DialogHead>
    <DialogBody>
      <Hint>
        To upload a file larger than 160 GB, use the AWS CLI, AWS SDK, or Amazon S3 REST<br />
        API. <LearnMore>Learn more <Glyph $w={30} $h={26} viewBox="0 0 30 26">
          <path d="M17 2H4Q1.500 2 1.500 4.500V22Q1.500 24.500 4 24.500H20Q22.500 24.500 22.500 22V13" fill="none" stroke="currentColor" strokeWidth="2.200" />
          <path d="M12 17L26 4" stroke="currentColor" strokeWidth="3" /><path d="M19 0H30V11Z" fill="currentColor" />
        </Glyph></LearnMore>
      </Hint>
      <DropArt viewBox="0 0 224 212">
        <path d="M105 0H160V56Q160 62 167 62H223V143Q223 150 216 150H97V8Q97 0 105 0Z" fill="#fff" />
        <path d="M172 1Q187 1 204 18T223 51H172Z" fill="#49a7de" />
        <path d="M0 106Q0 87 19 87H47Q66 87 66 106V110H125Q144 110 144 129V191Q144 210 125 210H19Q0 210 0 191Z" fill="#46a3db" />
      </DropArt>
      <DropText>Drag and drop files and folders here</DropText>
      <DropText>OR</DropText>
      <AddButton>Add files</AddButton>
      <Divider />
      <Actions>
        <ActionButton $w={137}>Upload</ActionButton>
        <ActionButton $w={105}>Next</ActionButton>
      </Actions>
    </DialogBody>
  </Dialog>
);

export default function App() {
  return (
    <Screen>
      <GlobalStyle />
      <FinderWindow />
      <SplitBar />
      <Browser>
        <Tabs />
        <Navigation />
        <AwsHeader />
        <Workspace>
          <Main>
            <Hero>
              <Glyph $w={64} $h={300} viewBox="0 0 64 300">
                <path d="M0 43Q32 33 64 32V58Q30 58 0 66Z" fill="#a4aeb6" opacity="0.5" />
                <path d="M0 66Q30 58 64 58V100Q20 98 0 94Z" fill="#9ba6ae" opacity="0.5" />
                <path d="M16 170Q36 154 64 154V166Q40 168 30 176ZM14 200Q20 234 64 250V228Q32 222 26 200Z" fill="#9aa6ae" opacity="0.5" />
              </Glyph>
            </Hero>
            <Listing />
            <Operations>
              <Operation $w={183}>Operations</Operation>
              <Operation $w={233}>0 In progress</Operation>
              <Operation $w={196}>1 Success</Operation>
              <Operation $w={120}>0 Error</Operation>
            </Operations>
          </Main>
          <Handle><Glyph $w={11} $h={18} viewBox="0 0 11 18"><path d="M0 0L11 9L0 18Z" fill="#3f4e59" /></Glyph></Handle>
        </Workspace>
        <AwsFooter>
          <Glyph $w={34} $h={33} viewBox="0 0 34 33"><path d="M17 0C27 0 34 6 34 14Q34 20 29 24L32.500 33L21 27.500Q19 28 17 28C7 28 0 22 0 14S7 0 17 0Z" fill="currentColor" /></Glyph>
          <FooterText $w={171} $ls={0.3}>Feedback</FooterText>
          <Glyph $w={33} $h={33} viewBox="0 0 33 33">
            <circle cx="16.500" cy="16.500" r="16.500" fill="currentColor" />
            <path d="M7 6Q12 2 18 4L16 7L21 7L24 10L19 13L17 17L12 18L11 20L15 23L16 28L13 27L10 21L6 14ZM20 27L25 23L26 25L22 30L19 30Z" fill="#3b4d5b" />
          </Glyph>
          <FooterText $w={200} $ls={-0.4}>English (US)</FooterText>
          <FooterLink $ml={453}>Privacy Policy</FooterLink>
          <FooterLink $ml={48}>Terms of Use</FooterLink>
        </AwsFooter>
        <Copyright>© 2008 - 2020, Amazon Web Services, Inc. or its affiliates. All rights reserved.</Copyright>
        <Upload />
      </Browser>
      <DragLayer><FileSet drag /></DragLayer>
      <Badge>9</Badge>
      <Pointer viewBox="0 0 26 38">
        <path d="M2 2V31L9 25L14 36L19 34L14.500 23H24Z" fill="#000" stroke="#fff" strokeWidth="2.200" strokeLinejoin="round" />
      </Pointer>
    </Screen>
  );
}
